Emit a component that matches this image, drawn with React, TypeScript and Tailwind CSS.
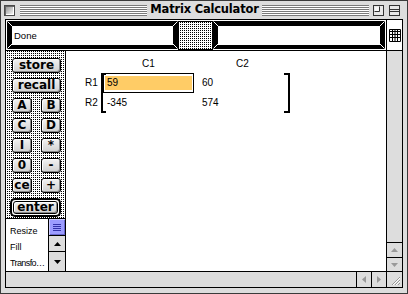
import React from "react";

function Bevel({ className, children }: { className: string; children?: React.ReactNode }) {
  return (
    <div className={"relative bg-black h-[28px] pt-[5px] pb-[4px] px-[5px] " + className}>
      <div className="bg-white h-full flex items-center pl-[1px] text-[9.5px] leading-none">{children}</div>
      <svg className="absolute inset-0 w-full h-full" preserveAspectRatio="none">
        <line x1="0.5" y1="0.5" x2="5" y2="5" stroke="#fff" strokeWidth="1" />
        <line x1="0.5" y1="27.5" x2="5" y2="23" stroke="#fff" strokeWidth="1" />
      </svg>
      <svg className="absolute right-0 top-0 w-[6px] h-[28px]">
        <line x1="5.5" y1="0.5" x2="1" y2="5" stroke="#fff" strokeWidth="1" />
        <line x1="5.5" y1="27.5" x2="1" y2="23" stroke="#fff" strokeWidth="1" />
      </svg>
    </div>
  );
}

function Btn({ className, children }: { className: string; children: React.ReactNode }) {
  return (
    <div
      className={
        "flex items-center justify-center rounded-[3px] border border-black bg-[linear-gradient(#f2f2f2,#d0d0d0)] shadow-[inset_1px_1px_0_#fff,inset_-1px_-1px_0_#8a8a8a] font-['DejaVu_Sans',sans-serif] font-bold text-[12px] leading-none text-black " +
        className
      }
    >
      <span className="-mt-[1px]">{children}</span>
    </div>
  );
}

function Tri({ dir, color }: { dir: "up" | "down" | "left" | "right"; color: string }) {
  const pts =
    dir === "up"
      ? "0,4 7,4 3.5,0"
      : dir === "down"
      ? "0,0 7,0 3.5,4"
      : dir === "left"
      ? "4,0 4,7 0,3.5"
      : "0,0 0,7 4,3.5";
  const w = dir === "up" || dir === "down" ? 7 : 4;
  const h = dir === "up" || dir === "down" ? 4 : 7;
  return (
    <svg width={w} height={h} viewBox={`0 0 ${w} ${h}`}>
      <polygon points={pts} fill={color} />
    </svg>
  );
}

const stripes =
  "h-[11px] bg-[repeating-linear-gradient(to_bottom,#7a7a7a_0px,#7a7a7a_1px,#ffffff_1px,#ffffff_2px)]";

export default function App() {
  return (
    <div className="w-[408px] h-[294px] bg-[#dddddd] border border-[#3a3a3a] flex flex-col font-['Liberation_Sans',Arial,sans-serif] text-black overflow-hidden">
      {/* Title bar */}
      <div className="h-[18px] flex items-center">
        <div className="ml-[3px] w-[11px] h-[11px] border border-[#4a4a4a] bg-[linear-gradient(135deg,#8c8c8c,#ffffff)] shadow-[inset_1px_1px_0_#666,inset_-1px_-1px_0_#fff]" />
        <div className={"ml-[5px] w-[127px] " + stripes} />
        <div className="w-[115px] text-center font-['DejaVu_Sans',sans-serif] font-bold text-[11.5px] leading-none tracking-[-0.2px]">
          Matrix Calculator
        </div>
        <div className={"w-[107px] " + stripes} />
        <svg className="ml-[4px]" width="11" height="11" viewBox="0 0 11 11">
          <rect x="0.5" y="0.5" width="10" height="10" fill="#e8e8e8" stroke="#333" />
          <path d="M1.5 6.5 H6.5 V1.5" fill="none" stroke="#333" />
          <path d="M2 2 H6 V6 H2 Z" fill="#f8f8f8" />
        </svg>
        <svg className="ml-[5px]" width="11" height="11" viewBox="0 0 11 11">
          <rect x="0.5" y="0.5" width="10" height="10" fill="#e8e8e8" stroke="#333" />
          <path d="M0.5 4.5 H10.5 M0.5 6.5 H10.5" stroke="#333" />
        </svg>
      </div>

      {/* Content */}
      <div className="flex-1 px-[4px] pb-[5px] flex">
        <div className="flex-1 border border-black bg-white flex flex-col">
          {/* Header */}
          <div className="h-[31px] border-b border-black flex">
            <div className="w-[380px] pl-[1px] pt-[1px] flex">
              <Bevel className="w-[171px]">
                <span className="pl-[1px]">Done</span>
              </Bevel>
              <div className="w-[35px] h-[29px] border border-black [background-image:conic-gradient(#000_0_25%,#fff_0_100%)] [background-size:2px_2px]" />
              <Bevel className="w-[172px]" />
            </div>
            <div className="w-[16px] border-l border-black flex items-start justify-center pt-[9px]">
              <svg width="12" height="13" viewBox="0 0 12 13">
                <path d="M0.5 0.5 H11.5 V12.5 H0.5 Z" fill="none" stroke="#000" />
                <path d="M0.5 2.5 H11.5 M0.5 5.5 H11.5 M0.5 8.5 H11.5 M3.5 0.5 V12.5 M6 0.5 V12.5 M8.5 0.5 V12.5" stroke="#000" />
              </svg>
            </div>
          </div>

          {/* Middle */}
          <div className="h-[220px] flex">
            {/* Sidebar */}
            <div className="w-[60px] border-r border-black flex flex-col">
              <div className="h-[170px] border-b border-black [background-image:conic-gradient(#000_0_25%,#fff_0_100%)] [background-size:2px_2px] pl-[6px] pt-[7px] flex flex-col">
                <div className="flex flex-col gap-[5px] w-[49px]">
                  <Btn className="h-[15px] w-[49px]">store</Btn>
                  <Btn className="h-[15px] w-[49px]">recall</Btn>
                  <div className="flex justify-between">
                    <Btn className="h-[15px] w-[20px]">A</Btn>
                    <Btn className="h-[15px] w-[20px]">B</Btn>
                  </div>
                  <div className="flex justify-between">
                    <Btn className="h-[15px] w-[20px]">C</Btn>
                    <Btn className="h-[15px] w-[20px]">D</Btn>
                  </div>
                  <div className="flex justify-between">
                    <Btn className="h-[15px] w-[20px]">I</Btn>
                    <Btn className="h-[15px] w-[20px]">*</Btn>
                  </div>
                  <div className="flex justify-between">
                    <Btn className="h-[15px] w-[20px]">0</Btn>
                    <Btn className="h-[15px] w-[20px]">-</Btn>
                  </div>
                  <div className="flex justify-between">
                    <Btn className="h-[15px] w-[20px]">ce</Btn>
                    <Btn className="h-[15px] w-[20px]">+</Btn>
                  </div>
                </div>
                <div className="mt-[5px] -ml-[2px] w-[51px] h-[19px] rounded-[5px] border-2 border-black p-[1px] bg-white">
                  <Btn className="h-[13px] w-full">enter</Btn>
                </div>
              </div>
              <div className="flex-1 flex">
                <div className="flex-1 pt-[4px] text-[9px] leading-none">
                  <div className="h-[16px] flex items-center pl-[4px]">Resize</div>
                  <div className="h-[16px] flex items-center pl-[4px]">Fill</div>
                  <div className="h-[16px] flex items-center pl-[4px] tracking-[-0.6px]">Transfo…</div>
                </div>
                <div className="w-[17px] border-l border-black flex flex-col">
                  <div className="h-[17px] border-b border-black bg-[#9c9cff] flex flex-col items-center justify-center gap-[1px] shadow-[inset_1px_1px_0_#ccccff,inset_-1px_-1px_0_#6666cc]">
                    <div className="w-[8px] h-[1px] bg-[#3333aa]" />
                    <div className="w-[8px] h-[1px] bg-[#3333aa]" />
                    <div className="w-[8px] h-[1px] bg-[#3333aa]" />
                    <div className="w-[8px] h-[1px] bg-[#3333aa]" />
                  </div>
                  <div className="h-[16px] border-b border-black bg-[#dddddd] flex items-center justify-center">
                    <Tri dir="up" color="#000" />
                  </div>
                  <div className="flex-1 bg-[#dddddd] flex items-center justify-center">
                    <Tri dir="down" color="#000" />
                  </div>
                </div>
              </div>
            </div>

            {/* Main */}
            <div className="flex-1 pl-[18px] pt-[7px] text-[10px] leading-none">
              <div className="flex h-[12px] items-center">
                <div className="w-[19px]" />
                <div className="w-[91px] text-center">C1</div>
                <div className="w-[97px] text-center">C2</div>
              </div>
              <div className="flex mt-[3px]">
                <div className="w-[17px] flex flex-col pl-[1px]">
                  <div className="h-[20px] flex items-center">R1</div>
                  <div className="h-[20px] flex items-center">R2</div>
                </div>
                <div className="w-[5px] h-[40px] border-l-2 border-t-2 border-b-2 border-black" />
                <div className="-ml-[3px] flex flex-col w-[181px]">
                  <div className="h-[20px] flex">
                    <div className="w-[91px] h-[20px] border border-black py-[2px] px-[1px]">
                      <div className="h-full bg-[#ffcc66] flex items-center pl-[2px]">59</div>
                    </div>
                    <div className="flex items-center pl-[8px]">60</div>
                  </div>
                  <div className="h-[20px] flex">
                    <div className="w-[91px] flex items-center pl-[4px]">-345</div>
                    <div className="flex items-center pl-[8px]">574</div>
                  </div>
                </div>
                <div className="w-[6px] h-[40px] border-r-2 border-t-2 border-b-2 border-black" />
              </div>
            </div>

            {/* Vertical scrollbar */}
            <div className="w-[16px] border-l border-black flex flex-col bg-[#dddddd]">
              <div className="flex-1" />
              <div className="h-[15px] border-t border-black flex items-center justify-center">
                <Tri dir="up" color="#999" />
              </div>
              <div className="h-[14px] border-t border-black flex items-center justify-center">
                <Tri dir="down" color="#999" />
              </div>
            </div>
          </div>

          {/* Bottom bar */}
          <div className="flex-1 border-t border-black flex bg-[#dddddd]">
            <div className="flex-1" />
            <div className="w-[15px] border-l border-black flex items-center justify-center">
              <Tri dir="left" color="#999" />
            </div>
            <div className="w-[15px] border-l border-black flex items-center justify-center">
              <Tri dir="right" color="#999" />
            </div>
            <div className="w-[16px] border-l border-black flex items-center justify-center">
              <svg width="12" height="12" viewBox="0 0 12 12">
                <path d="M11 3 L3 11 M11 6 L6 11 M11 9 L9 11" stroke="#999" />
                <path d="M11 4 L4 11 M11 7 L7 11" stroke="#fff" />
              </svg>
            </div>
          </div>
        </div>
      </div>
    </div>
  );
}
